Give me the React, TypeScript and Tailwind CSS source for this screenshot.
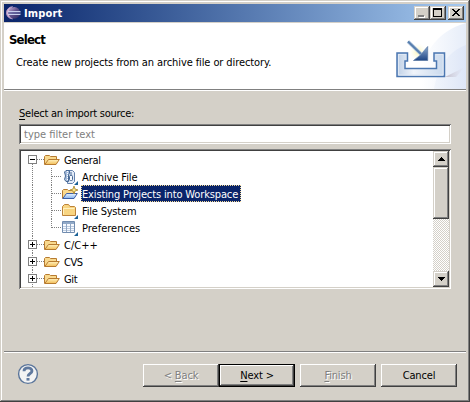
import type { ReactNode } from 'react';

const raised =
  'bg-[#d4d0c8] shadow-[inset_-1px_-1px_#404040,inset_1px_1px_#d4d0c8,inset_-2px_-2px_#808080,inset_2px_2px_#fff]';
const button =
  'bg-[#d4d0c8] shadow-[inset_-1px_-1px_#404040,inset_1px_1px_#fff,inset_-2px_-2px_#808080]';
const sunken =
  'bg-white shadow-[inset_1px_1px_#808080,inset_-1px_-1px_#fff,inset_2px_2px_#404040,inset_-2px_-2px_#d4d0c8]';

function EclipseIcon() {
  return (
    <svg width="16" height="16" viewBox="0 0 16 16" className="mr-[1px]">
      <defs>
        <linearGradient id="ball" x1="0" y1="0" x2="1" y2="1">
          <stop offset="0" stopColor="#c9b3d9" />
          <stop offset=".45" stopColor="#66568f" />
          <stop offset="1" stopColor="#27245d" />
        </linearGradient>
      </defs>
      <path d="M6.5 1.8A6 6 0 0 0 6.5 13.8A7 7 0 0 1 6.5 1.8Z" fill="#d5b5d4" stroke="#b79bc8" />
      <circle cx="8.3" cy="7.8" r="5.9" fill="url(#ball)" />
      <path d="M2 6.5H14.5M2 9.5H14.5" stroke="#c9d0ed" strokeWidth="1" />
      <path d="M2 8H15" stroke="#6571aa" />
    </svg>
  );
}

function ImportBanner() {
  return (
    <svg width="75" height="66" viewBox="0 0 75 66">
      <defs>
        <linearGradient id="sky" x1="0" y1="0" x2="1" y2="0">
          <stop offset=".1" stopColor="#fff" />
          <stop offset="1" stopColor="#e6edf9" />
        </linearGradient>
        <linearGradient id="swoosh" x1="0" y1="0" x2="1" y2="0">
          <stop offset="0" stopColor="#eef3fb" />
          <stop offset="1" stopColor="#dae3f6" />
        </linearGradient>
        <linearGradient id="tray" x1="0" y1="0" x2="1" y2="0">
          <stop offset="0" stopColor="#bfd0e6" />
          <stop offset=".35" stopColor="#f0f4fa" />
          <stop offset="1" stopColor="#c9d9ed" />
        </linearGradient>
        <linearGradient id="head" x1="0" y1="0" x2="0" y2="1">
          <stop offset="0" stopColor="#8eabd0" />
          <stop offset="1" stopColor="#1f4685" />
        </linearGradient>
        <radialGradient id="glow">
          <stop offset="0" stopColor="#fbf5b5" />
          <stop offset="1" stopColor="#fffef0" stopOpacity="0" />
        </radialGradient>
        <linearGradient id="shade">
          <stop offset="0" stopColor="#a99fad" stopOpacity=".65" />
          <stop offset="1" stopColor="#d9d5e4" stopOpacity="0" />
        </linearGradient>
      </defs>
      <path d="M26 66C30 32 45 8 75 0V66Z" fill="url(#sky)" />
      <path d="M43 66C47 43 58 28 75 22V66Z" fill="url(#swoosh)" opacity=".7" />
      <path d="M54 54L74 44L65 54Z" fill="url(#shade)" />
      <circle cx="27" cy="29" r="9" fill="url(#glow)" />
      <path
        d="M6 30H16.5V38H14V45.5H45.5V38H43V30H53.5V53.5H6Z"
        fill="url(#tray)"
        stroke="#4b77b1"
        strokeWidth="1.5"
      />
      <path d="M7.5 31.5H15M7.5 31V52H52V31.5H45" fill="none" stroke="#dfe8f4" />
      <path d="M17 18.5L31 32" stroke="#b4c8df" strokeWidth="3.6" />
      <path d="M17 18.5L31 32" stroke="#587fae" strokeWidth="2" />
      <path d="M36.7 23.5V37.5H22.5L29.5 32Z" fill="url(#head)" stroke="#54749f" strokeWidth=".7" />
      <path d="M36.5 24L29.5 32L23.5 37Z" fill="#94b1d4" opacity=".7" />
    </svg>
  );
}

function FolderOpen({ blue = false }: { blue?: boolean }) {
  return (
    <svg width="16" height="16" viewBox="0 0 16 16">
      <defs>
        <linearGradient id="fold" x1="0" y1="0" x2="0" y2="1">
          <stop offset="0" stopColor="#fff2bf" />
          <stop offset="1" stopColor="#f2bd57" />
        </linearGradient>
        <linearGradient id="foldBlue" x1="0" y1="0" x2="0" y2="1">
          <stop offset="0" stopColor="#edf5ff" />
          <stop offset="1" stopColor="#83b2ee" />
        </linearGradient>
      </defs>
      <path d="M.5 12.5V4.5L1.5 3.5H5.5L6.5 4.5H12.5V7.5" fill="#f9d98e" stroke="#b77b30" />
      <path
        d="M.8 12.5L4.5 7.5H15.3L12 12.5Z"
        fill={blue ? 'url(#foldBlue)' : 'url(#fold)'}
        stroke={blue ? '#3c5fa8' : '#b77b30'}
      />
      {blue && (
        <path d="M12 0L13 3L16 4L13 5L12 8L11 5L8 4L11 3Z" fill="#f8e68d" stroke="#a9852c" strokeWidth=".8" />
      )}
    </svg>
  );
}

const Corner = () => <path d="M16 12V16H12Z" fill="#1b6196" />;

function ArchiveIcon() {
  return (
    <svg width="16" height="16" viewBox="0 0 16 16">
      <path d="M5.5 1.5H10.5L12.5 3.5V12.5L10.5 14.5H5.5Z" fill="#e2ebf7" stroke="#6582ad" />
      <path d="M2.5 3L4 1.5H7.5V4L6.5 6V12.5H4L2.5 10.5L3.5 7Z" fill="#a9bedc" stroke="#486995" />
      <path d="M5.5 2V11" stroke="#fff" strokeDasharray="1 1" />
      <rect x="7.5" y="6.5" width="3" height="5" rx="1" fill="#f7f9fc" stroke="#486995" />
      <path d="M9 3V7" stroke="#486995" />
      <Corner />
    </svg>
  );
}

function FolderClosed() {
  return (
    <svg width="16" height="16" viewBox="0 0 16 16">
      <path d="M.5 12.5V3.5L2.5 1.5H6.5L8 3.5H12.5L13.5 4.5V12.5Z" fill="#f8d582" stroke="#bd8339" />
      <path d="M1.5 5.5H12.5M1.5 5V11.5" stroke="#fff0bd" />
      <Corner />
    </svg>
  );
}

function TableIcon() {
  return (
    <svg width="16" height="16" viewBox="0 0 16 16">
      <path d="M.5 1.5H12.5V12.5H.5Z" fill="#f7faff" stroke="#718caf" />
      <path d="M1 2H12V4H1Z" fill="#91a9c7" />
      <path d="M1 6.5H12M1 8.5H12M1 10.5H12" stroke="#bdcce0" />
      <path d="M4.5 4V12M8.5 4V12" stroke="#91a7c3" />
      <Corner />
    </svg>
  );
}

function ParentRow({ label, open = false, spacing }: { label: string; open?: boolean; spacing: string }) {
  return (
    <div className="flex h-[17px] items-center">
      <svg width="23" height="17" viewBox="0 0 23 17" shapeRendering="crispEdges">
        <path d={open ? 'M11.5 13V17' : 'M11.5 0V17'} stroke="#808080" strokeDasharray="1 1" />
        <path d="M16 8.5H23" stroke="#808080" strokeDasharray="1 1" />
        <rect x="7.5" y="4.5" width="8" height="8" fill="#fff" stroke="#808080" />
        <path d={open ? 'M9 8.5H14' : 'M9 8.5H14M11.5 6V11'} stroke="#000" />
      </svg>
      <FolderOpen />
      <span className={`mt-[2px] ml-1 ${spacing}`}>{label}</span>
    </div>
  );
}

function ChildRow({
  label,
  icon,
  spacing,
  selected = false,
  last = false,
}: {
  label: string;
  icon: ReactNode;
  spacing: string;
  selected?: boolean;
  last?: boolean;
}) {
  return (
    <div className="flex h-[17px] items-center">
      <svg width="41" height="17" viewBox="0 0 41 17" shapeRendering="crispEdges">
        <path d="M11.5 0V17" stroke="#808080" strokeDasharray="1 1" />
        <path d={last ? 'M30.5 0V9' : 'M30.5 0V17'} stroke="#808080" strokeDasharray="1 1" />
        <path d="M31 8.5H41" stroke="#808080" strokeDasharray="1 1" />
      </svg>
      {icon}
      {selected ? (
        <span className="ml-[3px] h-[17px] w-[160px] border border-dotted border-[#f5db95] bg-[#0a246a] leading-[17px] text-white">
          <span className={spacing}>{label}</span>
        </span>
      ) : (
        <span className={`mt-[2px] ml-1 ${spacing}`}>{label}</span>
      )}
    </div>
  );
}

const Arrow = ({ down = false }: { down?: boolean }) => (
  <svg width="7" height="4" viewBox="0 0 7 4" shapeRendering="crispEdges">
    <path d={down ? 'M0 .5H7M1 1.5H6M2 2.5H5M3 3.5H4' : 'M3 .5H4M2 1.5H5M1 2.5H6M0 3.5H7'} stroke="#000" />
  </svg>
);

export default function App() {
  return (
    <div className="flex h-[402px] w-[470px] flex-col bg-[#d4d0c8] px-1 pt-1 font-['DejaVu_Sans_Condensed','DejaVu_Sans',sans-serif] text-[11px] leading-[17px] whitespace-nowrap text-black [font-stretch:condensed] shadow-[inset_-1px_-1px_#404040,inset_1px_1px_#d4d0c8,inset_-2px_-2px_#808080,inset_2px_2px_#fff]">
      <div className="flex h-[18px] shrink-0 items-center bg-linear-to-r from-[#0a246a] to-[#a6caf0] pr-[2px] pl-[2px]">
        <EclipseIcon />
        <span className="ml-px text-[11px] font-bold tracking-[0.15px] text-white">Import</span>
        <div className="ml-auto flex">
          <div className={`flex h-[14px] w-4 ${raised}`}>
            <span className="mt-[9px] ml-1 h-[2px] w-[6px] bg-[#808080] shadow-[1px_1px_#fff]" />
          </div>
          <div className={`h-[14px] w-4 pt-[2px] pl-[3px] ${raised}`}>
            <div className="h-[9px] w-[9px] border border-t-2 border-black" />
          </div>
          <div className={`ml-[2px] flex h-[14px] w-4 pt-[3px] pl-1 ${raised}`}>
            <svg width="8" height="7" viewBox="0 0 8 7" shapeRendering="crispEdges">
              <path d="M0 .5H2M6 .5H8M1 1.5H3M5 1.5H7M2 2.5H6M3 3.5H5M2 4.5H6M1 5.5H3M5 5.5H7M0 6.5H2M6 6.5H8" stroke="#000" />
            </svg>
          </div>
        </div>
      </div>

      <div className="mt-px flex h-[68px] shrink-0 justify-between border-b border-white bg-white shadow-[inset_0_-1px_#808080]">
        <div className="pt-[8px] pl-[5px]">
          <h1 className="text-[13px] leading-[17px] font-bold tracking-[-0.8px]">Select</h1>
          <p className="mt-[6px] ml-[7px] tracking-[-0.1px]">Create new projects from an archive file or directory.</p>
        </div>
        <ImportBanner />
      </div>

      <main className="pl-[15px]">
        <div className="mt-[14px] mb-[2px] h-[17px] tracking-[-0.25px]">
          <span className="underline underline-offset-2">S</span>elect an import source:
        </div>
        <div className={`h-5 w-[432px] pt-[2px] pl-[5px] text-[#808080] ${sunken}`}>type filter text</div>

        <div className={`mt-[5px] flex h-[140px] w-[432px] p-[2px] ${sunken}`}>
          <div className="flex-1">
            <ParentRow label="General" open spacing="tracking-[-0.35px]" />
            <ChildRow label="Archive File" icon={<ArchiveIcon />} spacing="tracking-[-0.1px]" />
            <ChildRow label="Existing Projects into Workspace" icon={<FolderOpen blue />} spacing="tracking-[-0.14px]" selected />
            <ChildRow label="File System" icon={<FolderClosed />} spacing="tracking-[-0.2px]" />
            <ChildRow label="Preferences" icon={<TableIcon />} spacing="tracking-[0px]" last />
            <ParentRow label="C/C++" spacing="tracking-[0px]" />
            <ParentRow label="CVS" spacing="tracking-[-0.5px]" />
            <ParentRow label="Git" spacing="tracking-[-0.3px]" />
          </div>
          <div className="flex h-[136px] w-4 flex-col bg-[repeating-conic-gradient(#fff_0_25%,#d4d0c8_0_50%)] bg-size-[2px_2px]">
            <div className={`flex h-4 items-center justify-center ${raised}`}><Arrow /></div>
            <div className={`h-[52px] ${raised}`} />
            <div className={`mt-auto flex h-4 items-center justify-center ${raised}`}><Arrow down /></div>
          </div>
        </div>
      </main>

      <footer className="mt-[62px] flex h-[49px] border-t border-[#808080] shadow-[inset_0_1px_#fff]">
        <svg width="22" height="22" viewBox="0 0 22 22" className="mt-[11px] ml-[13px]">
          <circle cx="11" cy="11" r="9.4" fill="#f3f3f3" stroke="#59749a" strokeWidth="1.4" />
          <path d="M7 8.2C7 3.8 15 4 15 8C15 10.6 11 10.5 11 13.4" fill="none" stroke="#60799e" strokeWidth="2.8" />
          <path d="M9.5 15H12.5V17.6H9.5Z" fill="#60799e" />
        </svg>
        <div className="mt-3 ml-[104px] flex h-[23px] text-center leading-[24px] tracking-[-0.15px]">
          <div className={`w-[76px] text-[#808080] [text-shadow:1px_1px_#fff] ${button}`}>
            &lt; <span className="underline underline-offset-2">B</span>ack
          </div>
          <div className="w-[76px] border border-black bg-[#d4d0c8] leading-[22px] shadow-[inset_-1px_-1px_#404040,inset_1px_1px_#fff,inset_-2px_-2px_#808080]">
            <span className="underline underline-offset-2">N</span>ext &gt;
          </div>
          <div className={`ml-[5px] w-[76px] text-[#808080] [text-shadow:1px_1px_#fff] ${button}`}>
            <span className="underline underline-offset-2">F</span>inish
          </div>
          <div className={`ml-[5px] w-[76px] ${button}`}>Cancel</div>
        </div>
      </footer>
    </div>
  );
}
